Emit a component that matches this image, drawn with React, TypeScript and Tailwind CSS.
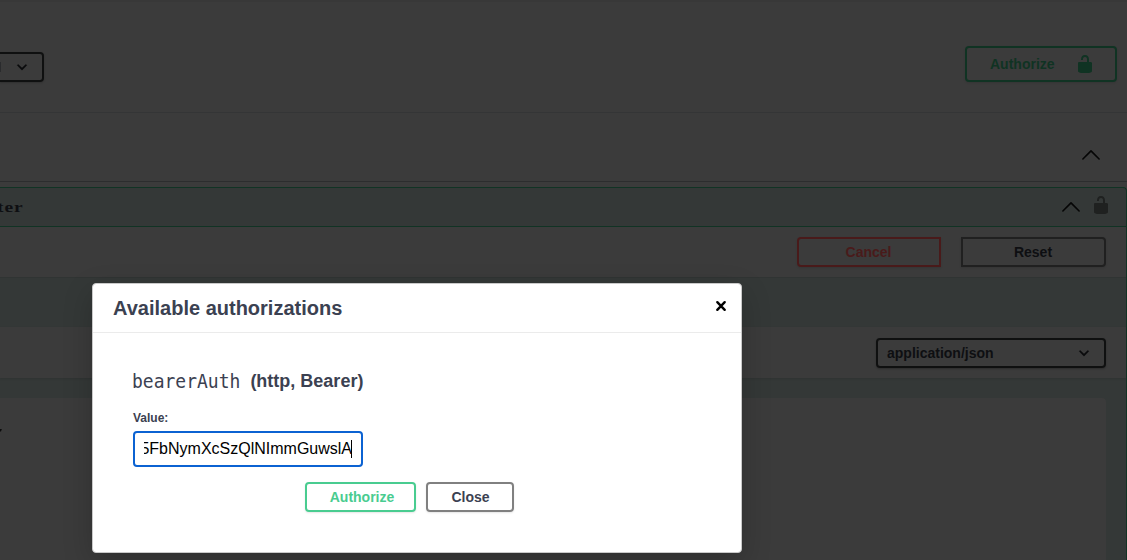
import React from "react";

function ArrowUp() {
  return (
    <svg className="h-5 w-5 shrink-0" viewBox="0 0 20 20" fill="none" stroke="#050505" strokeWidth="1.6" strokeLinecap="round" strokeLinejoin="round">
      <path d="M1.9 14 10 5.9 18.1 14" />
    </svg>
  );
}

function Chevron() {
  return (
    <svg className="h-5 w-5 shrink-0" viewBox="0 0 20 20" fill="#0a0b0c">
      <path d="M13.418 7.859a.695.695 0 0 1 .978 0 .68.68 0 0 1 0 .969l-3.908 3.83a.697.697 0 0 1-.979 0l-3.908-3.83a.68.68 0 0 1 0-.969.695.695 0 0 1 .978 0L10 11z" stroke="#0a0b0c" strokeWidth="0.4" />
    </svg>
  );
}

function Unlocked({ className }: { className: string }) {
  return (
    <svg className={className} viewBox="0 0 20 20" fill="currentColor">
      <path d="M15.8 8H14V5.6C14 2.703 12.665 1 10 1 7.334 1 6 2.703 6 5.6V6h2v-.801C8 3.754 8.797 3 10 3c1.203 0 2 .754 2 2.199V8H4c-.553 0-1 .646-1 1.199V17c0 .549.428 1.139.951 1.307l1.197.387C5.672 18.861 6.55 19 7.1 19h5.8c.549 0 1.428-.139 1.951-.307l1.196-.387c.524-.167.953-.757.953-1.306V9.199C17 8.646 16.352 8 15.8 8z" />
    </svg>
  );
}

function Background() {
  return (
    <div className="flex h-full flex-col text-sm font-bold">
      <header className="flex h-[113px] shrink-0 justify-between border-t-2 border-b border-t-[#383838] border-b-[#343536] pr-[10px]">
        <div className="mt-[50px] flex h-[30px] w-[44px] items-center justify-between rounded-r border-2 border-l-0 border-[#0f1010] pr-[10px] shadow-[0_1px_2px_rgba(0,0,0,0.2)]">
          <span className="h-[10px] w-px bg-[#2a2b2d]" />
          <Chevron />
        </div>
        <div className="mt-11 flex h-9 w-[152px] items-center rounded border-2 border-[#103323] pl-[23px] text-[#103323] shadow-[0_1px_2px_rgba(0,0,0,0.1)]">
          <span className="flex-1">Authorize</span>
          <Unlocked className="mr-5 mb-px h-5 w-5" />
        </div>
      </header>
      <div className="flex h-[69px] shrink-0 items-center justify-end border-b border-[#2c2d2e] pt-[15px] pr-[26px]">
        <ArrowUp />
      </div>
      <section className="mt-[5px] flex flex-1 flex-col rounded-tr border-t border-r border-[#113324] bg-[#343837]">
        <div className="flex h-[39px] shrink-0 items-center border-b border-[#113324]">
          <div className="flex-1 pt-[2px]">
            <span className="-ml-[3px] inline-block origin-left scale-x-[1.3] font-['Liberation_Serif'] text-[15px] tracking-[0.7px] text-[#0e0f12]">ter</span>
          </div>
          <ArrowUp />
          <Unlocked className="mr-[15px] ml-[10px] h-5 w-5 -translate-y-0.5 text-[#1f2120]" />
        </div>
        <div className="flex h-[50px] shrink-0 justify-end gap-[20px] bg-[#3b3b3b] pt-[10px] pr-5">
          <div className="flex h-[30px] w-[144px] items-center justify-center rounded-l border-2 border-[#491a1a] pr-px text-[#491a1a] shadow-[0_1px_2px_rgba(0,0,0,0.1)]">Cancel</div>
          <div className="flex h-[30px] w-[145px] items-center justify-center rounded-r border-2 border-[#202020] pr-px text-[#0e0f12] shadow-[0_1px_2px_rgba(0,0,0,0.1)]">Reset</div>
        </div>
        <div className="h-[50px] shrink-0 border-t border-[#303433]" />
        <div className="flex h-[51px] shrink-0 items-center justify-end bg-[#3b3b3b] pr-5 shadow-[0_1px_2px_rgba(0,0,0,0.1)]">
          <div className="flex h-[30px] w-[230px] items-center justify-between rounded border-2 border-[#0f1010] pr-[10px] pl-[9px] text-[#0e0f12] shadow-[0_1px_2px_rgba(0,0,0,0.25)]">
            application/json
            <Chevron />
          </div>
        </div>
        <div className="mt-5 mr-5 flex-1 rounded-tr bg-[#3b3b3b] pt-[29px]">
          <svg className="h-2 w-2" viewBox="0 0 8 8"><path d="M0 2h1.9L.9 4.6H0z" fill="#0c0c0c" /></svg>
        </div>
      </section>
    </div>
  );
}

function AuthDialog() {
  return (
    <div className="absolute top-[283px] left-[92px] flex h-[270px] w-[650px] flex-col rounded border border-[#c9c9c9] bg-white text-[#3b4151] shadow-[0_10px_30px_rgba(0,0,0,0.2)]">
      <div className="flex h-[49px] shrink-0 items-center justify-between border-b border-[#ebebeb] pr-[10px] pl-5">
        <h3 className="text-[20px] font-semibold">Available authorizations</h3>
        <svg className="mb-1 h-5 w-5" viewBox="0 0 20 20" fill="none" stroke="#000" strokeWidth="2.4" strokeLinecap="round">
          <path d="M6.3 6.2 13.7 13.8M13.7 6.2 6.3 13.8" />
        </svg>
      </div>
      <div className="flex flex-col px-10">
        <h4 className="mt-[34px] flex h-7 items-center">
          <code className="-ml-px origin-center -translate-y-px scale-y-110 font-['DejaVu_Sans_Mono'] text-[18px] font-normal">bearerAuth</code>
          <span className="ml-[10px] text-[18px] font-bold">(http, Bearer)</span>
        </h4>
        <label className="mt-4 h-[14px] text-[12px] leading-[14px] font-bold">Value:</label>
        <div className="mt-[6px] flex h-9 w-[230px] items-center rounded border-2 border-[#0b62d2] px-[9px] text-[16px] text-black">
          <div className="flex h-6 w-full items-center justify-end overflow-hidden">
            <span className="-mr-px shrink-0">5FbNymXcSzQlNImmGuwslA</span>
            <span className="h-[18px] w-px shrink-0 bg-black" />
          </div>
        </div>
      </div>
      <div className="mt-[15px] ml-[212px] flex gap-[10px] text-sm font-bold">
        <div className="flex h-[30px] w-[111px] items-center justify-center rounded border-2 border-[#49cc90] pl-[3px] text-[#49cc90] shadow-[0_1px_2px_rgba(0,0,0,0.1)]">Authorize</div>
        <div className="flex h-[30px] w-[88px] items-center justify-center rounded border-2 border-[#808080] pl-px shadow-[0_1px_2px_rgba(0,0,0,0.1)]">Close</div>
      </div>
    </div>
  );
}

export default function App() {
  return (
    <div className="relative h-[560px] w-[1127px] overflow-hidden bg-[#3b3b3b] font-['Liberation_Sans',sans-serif]">
      <Background />
      <AuthDialog />
    </div>
  );
}
